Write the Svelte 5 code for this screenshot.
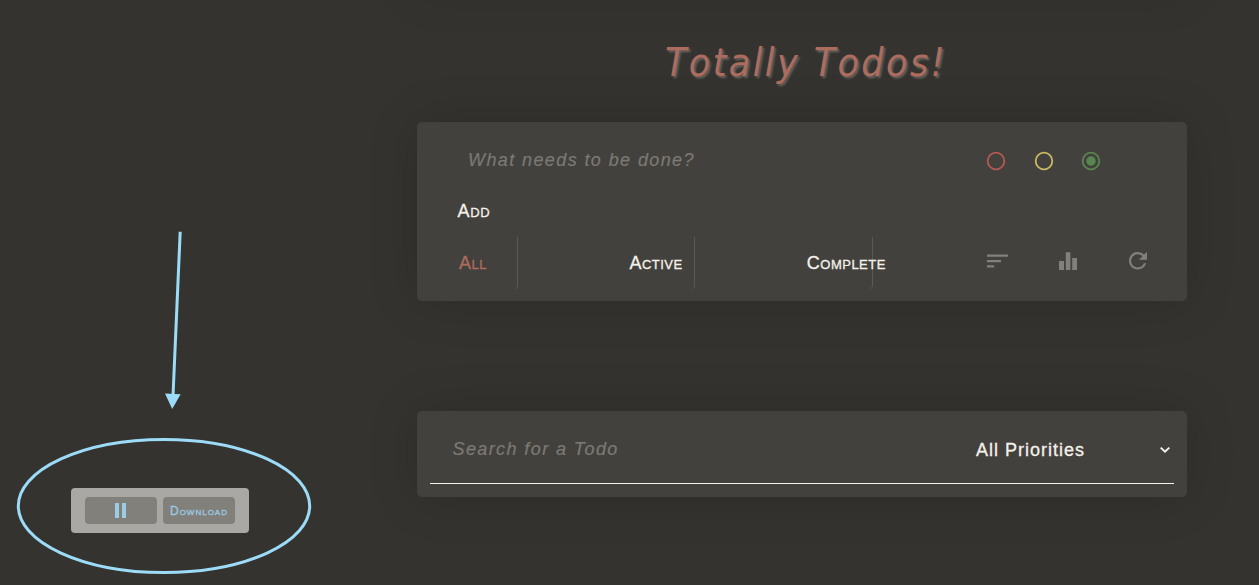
<script>
  const priorities = [
    { name: 'high', color: '#b35a52' },
    { name: 'medium', color: '#c9b862' },
    { name: 'low', color: '#588650' },
  ];
  const filters = ['All', 'Active', 'Complete'];
  let priority = $state('low');
  let filter = $state('All');
</script>

<div class="page">
  <div class="previous"></div>
  <main>
    <h1>Totally Todos!</h1>

    <section class="card editor">
      <div class="entry">
        <input class="field" placeholder="What needs to be done?" />
        <div class="radios">
          {#each priorities as p}
            <button class="radio" aria-label={p.name} onclick={() => (priority = p.name)}>
              <svg width="20" height="20" viewBox="0 0 20 20" fill="none">
                <circle cx="10" cy="10" r="8.3" stroke={p.color} stroke-width="1.8" />
                {#if priority === p.name}<circle cx="10" cy="10" r="4.7" fill={p.color} />{/if}
              </svg>
            </button>
          {/each}
        </div>
      </div>
      <button class="caps add">Add</button>
      <div class="toolbar">
        <div class="filters">
          {#each filters as f}
            <button class="caps filter" class:active={filter === f} onclick={() => (filter = f)}>{f}</button>
          {/each}
        </div>
        <div class="tools">
          <svg width="22" height="20" viewBox="0 0 22 20"><path d="M0 4.4h21v2.4H0zM0 10h14v2.2H0zM0 15.2h7.2v2.3H0z" /></svg>
          <svg width="19" height="20" viewBox="0 0 19 20"><path d="M0 11h5v9H0zM6.8 2.2h4.6V20H6.8zM13.2 8h4.8v12h-4.8z" /></svg>
          <svg width="20" height="20" viewBox="0 0 20 20"><path d="M16.1 4.6A8.8 8.8 0 1 0 18.2 13.2h-2.3a6.6 6.6 0 1 1-1.4-6.9L11 9.8h8V2z" /></svg>
        </div>
      </div>
    </section>

    <section class="card search">
      <div class="search-row">
        <input class="field" placeholder="Search for a Todo" />
        <button class="select">
          All Priorities
          <svg width="12" height="8" viewBox="0 0 12 8" fill="none" stroke="#f3f1ea" stroke-width="2"><path d="M1.7 1.6 6 5.7l4.3-4.1" /></svg>
        </button>
      </div>
    </section>
  </main>

  <div class="recorder">
    <button aria-label="Pause">
      <svg width="12" height="15" viewBox="0 0 12 15"><path d="M0 0h4v15H0zM7 0h4v15H7z" fill="#9ccbe3" /></svg>
    </button>
    <button class="download">Download</button>
  </div>

  <svg class="annotation" width="330" height="585" viewBox="0 0 330 585" fill="none">
    <ellipse cx="164" cy="506" rx="145.7" ry="66.5" stroke="#9cdcf8" stroke-width="3" />
    <path d="M180.2 231.7 173 396" stroke="#9cdcf8" stroke-width="3" />
    <path d="M165 393.6 180.6 394.3 172.2 409z" fill="#9cdcf8" />
  </svg>
</div>

<style>
  :global(body) {
    background: #35332f;
  }
  .page {
    position: relative;
    height: 585px;
    overflow: hidden;
    font-family: 'Liberation Sans', Arial, sans-serif;
    color: #f3f1ea;
  }
  main {
    width: 770px;
    margin-left: 417px;
    padding-top: 35px;
    box-sizing: border-box;
  }
  .previous {
    position: absolute;
    left: 417px;
    top: -90px;
    width: 770px;
    height: 80px;
    box-shadow: 0 0 50px rgba(0, 0, 0, 0.12);
  }
  h1 {
    position: relative;
    margin: 0 0 32px 8px;
    height: 55px;
    text-align: center;
    font: italic 400 39px/55px 'DejaVu Sans Condensed', 'Open Sans', sans-serif;
    font-kerning: none;
    letter-spacing: 2.4px;
    color: #ae6c5e;
    text-shadow: 2px 2px 2px #65625c;
  }
  button {
    margin: 0;
    padding: 0;
    border: 0;
    background: none;
    color: inherit;
    font: 18px/22px 'Liberation Sans', Arial, sans-serif;
    letter-spacing: 1px;
    text-align: left;
    -webkit-text-stroke: 0.3px currentColor;
  }
  .card {
    position: relative;
    box-sizing: border-box;
    border-radius: 5px;
    background: #43413d;
    box-shadow: 0 0 50px rgba(0, 0, 0, 0.15);
  }
  .editor {
    height: 179px;
    padding: 25px 37px 0 13px;
  }
  .entry {
    display: flex;
    justify-content: space-between;
    align-items: center;
    height: 26px;
    padding: 0 49px 0 38px;
  }
  .field {
    flex: 1;
    min-width: 0;
    padding: 0;
    border: 0;
    outline: 0;
    background: none;
    color: #f3f1ea;
    font: italic 18px/22px 'Liberation Sans', Arial, sans-serif;
    letter-spacing: 1.4px;
    -webkit-text-stroke: 0.2px #7b7974;
  }
  .field::placeholder {
    color: #7b7974;
    opacity: 1;
  }
  .radios {
    display: flex;
    gap: 27.5px;
    padding-top: 2px;
  }
  .radio,
  .radio svg {
    display: block;
  }
  .caps {
    font-variant: small-caps;
    letter-spacing: 0.5px;
  }
  .add {
    display: block;
    margin: 27px 0 0 27.5px;
    letter-spacing: 0.7px;
  }
  .toolbar {
    display: flex;
    justify-content: space-between;
    margin-top: 15px;
  }
  .filters {
    display: flex;
    gap: 89.4px;
  }
  .filter {
    box-sizing: border-box;
    width: 88px;
    height: 53px;
    padding: 0 0 1px 22px;
    border-right: 1px solid #5b5954;
    border-radius: 0 0 5px 0;
    white-space: nowrap;
  }
  .filter:first-child {
    padding-left: 29px;
  }
  .active {
    color: #ae6c5e;
  }
  .tools {
    display: flex;
    gap: 50px;
    padding: 13px 2px 0 0;
    fill: #82807b;
  }
  .search {
    height: 86px;
    margin-top: 110px;
    padding: 13px 13px 0;
  }
  .search-row {
    display: flex;
    align-items: center;
    box-sizing: border-box;
    height: 60px;
    padding: 0 3px 9px 22.5px;
    border-bottom: 1px solid #f3f1ea;
  }
  .select {
    display: flex;
    align-items: center;
    justify-content: space-between;
    width: 195px;
    padding-top: 1px;
  }
  .recorder {
    position: absolute;
    left: 71px;
    top: 488px;
    display: flex;
    gap: 6px;
    box-sizing: border-box;
    width: 178px;
    height: 45px;
    padding: 9px 14px;
    border-radius: 4px;
    background: #a9a8a4;
  }
  .recorder button {
    display: flex;
    align-items: center;
    justify-content: center;
    width: 72px;
    height: 27px;
    border-radius: 4px;
    background: #82807b;
    color: #9ccbe3;
  }
  .recorder .download {
    font-size: 12px;
    font-variant: small-caps;
    letter-spacing: 1px;
  }
  .annotation {
    position: absolute;
    left: 0;
    top: 0;
    pointer-events: none;
  }
</style>
